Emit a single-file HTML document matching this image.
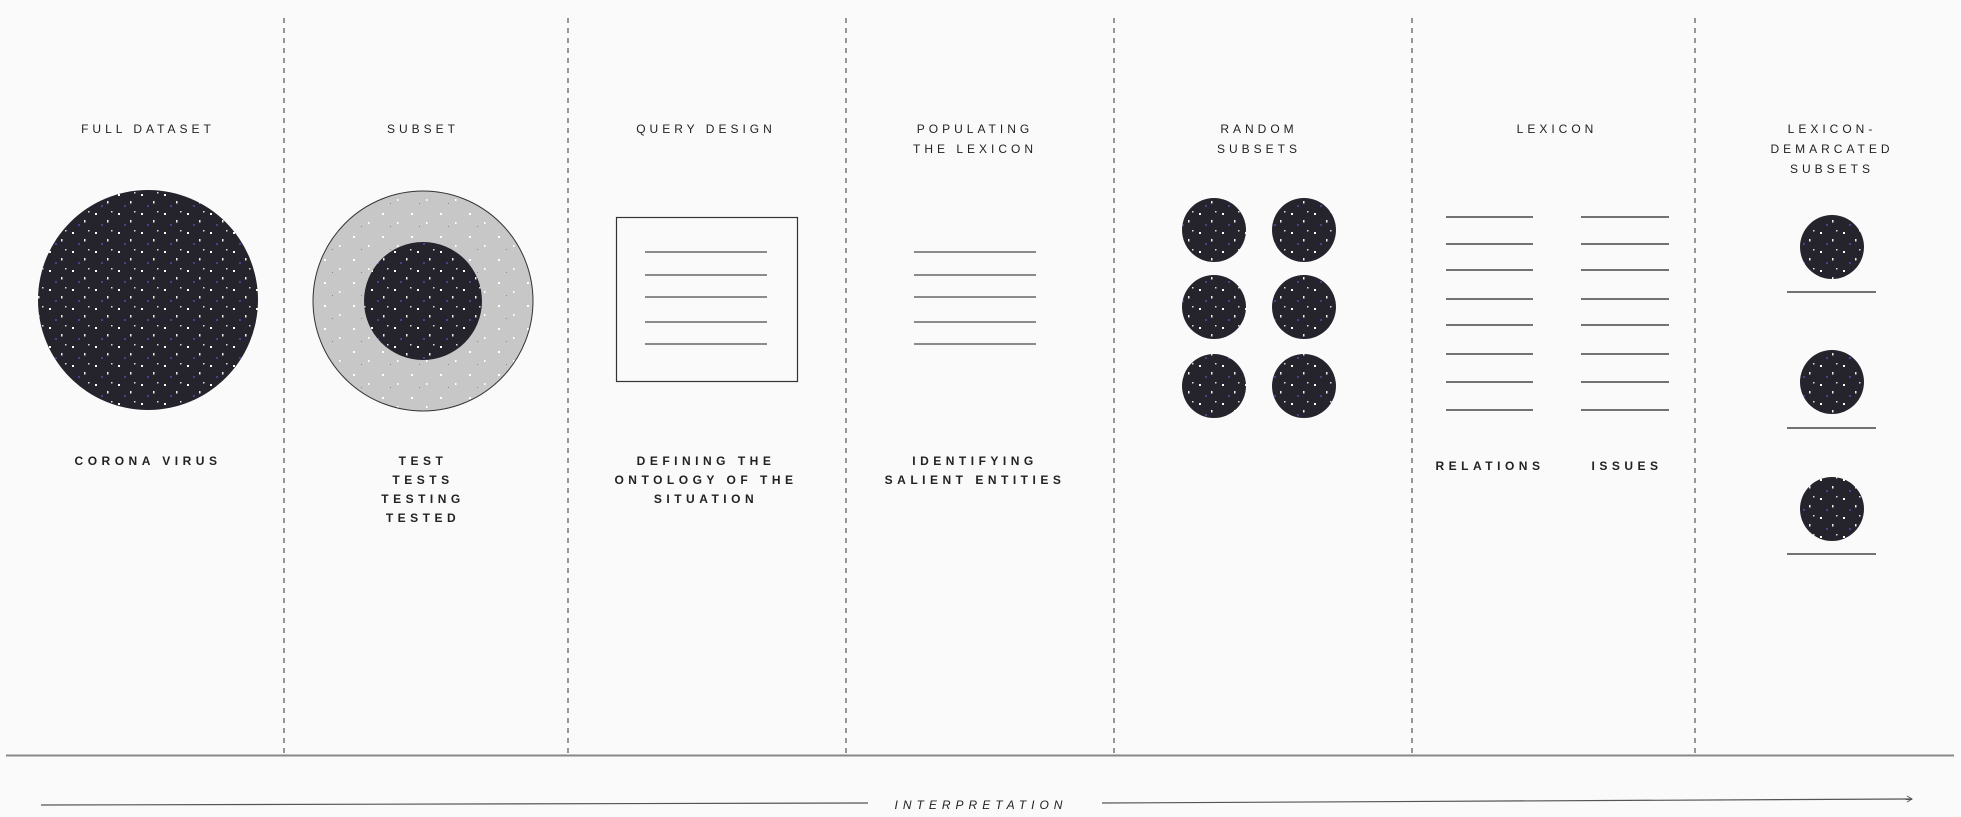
<!DOCTYPE html>
<html><head><meta charset="utf-8"><style>
html,body{margin:0;padding:0;background:#fbfafa;}
svg{display:block}
text{font-family:"Liberation Sans",sans-serif;font-size:12px;letter-spacing:4px;fill:#222;text-anchor:middle;}
.b{font-weight:bold;letter-spacing:4.5px}
</style></head><body>
<svg width="1961" height="817" viewBox="0 0 1961 817" xmlns="http://www.w3.org/2000/svg">
<defs>
<pattern id="sp" width="23" height="19" patternUnits="userSpaceOnUse">
<rect width="23" height="19" fill="#25242c"/>
<rect x="3" y="4" width="2" height="2" fill="#fff"/>
<rect x="15" y="11" width="1.5" height="2.5" fill="#eee"/>
<rect x="9" y="15" width="2" height="2" fill="#4a3f90"/>
<rect x="19" y="2" width="1.5" height="1.5" fill="#ddd"/>
</pattern>
<pattern id="sp2" width="29" height="23" patternUnits="userSpaceOnUse">
<rect width="29" height="23" fill="#c7c7c7"/>
<rect x="5" y="6" width="2" height="2" fill="#fff"/>
<rect x="20" y="15" width="1.5" height="2" fill="#fff"/>
<rect x="13" y="19" width="1" height="1" fill="#888"/>
</pattern>
</defs>
<g stroke="#555" stroke-width="1.2" stroke-dasharray="5,5">
<line x1="284" y1="18" x2="284" y2="755"/>
<line x1="568" y1="18" x2="568" y2="755"/>
<line x1="846" y1="18" x2="846" y2="755"/>
<line x1="1114" y1="18" x2="1114" y2="755"/>
<line x1="1412" y1="18" x2="1412" y2="755"/>
<line x1="1695" y1="18" x2="1695" y2="755"/>
</g>
<line x1="6" y1="755.5" x2="1954" y2="755.5" stroke="#888" stroke-width="2"/>
<line x1="41" y1="805" x2="868" y2="803" stroke="#555" stroke-width="1.2"/>
<line x1="1102" y1="803" x2="1912" y2="799" stroke="#555" stroke-width="1.2"/>
<polyline points="1907,796 1912,799 1907,802" fill="none" stroke="#555" stroke-width="1"/>
<text x="981" y="809" style="font-style:italic;letter-spacing:5px;font-size:12px">INTERPRETATION</text>

<text x="148" y="133">FULL DATASET</text>
<circle cx="148" cy="300" r="110" fill="url(#sp)"/>
<text class="b" x="148" y="465">CORONA VIRUS</text>

<text x="423" y="133">SUBSET</text>
<circle cx="423" cy="301" r="110" fill="url(#sp2)" stroke="#333" stroke-width="1"/>
<circle cx="423" cy="301" r="59" fill="url(#sp)"/>
<text class="b" x="423" y="465">TEST</text>
<text class="b" x="423" y="484">TESTS</text>
<text class="b" x="423" y="503">TESTING</text>
<text class="b" x="423" y="522">TESTED</text>

<text x="706" y="133">QUERY DESIGN</text>
<rect x="616.5" y="217.5" width="181" height="164" fill="none" stroke="#333" stroke-width="1.2"/>
<g stroke="#666" stroke-width="1.5">
<line x1="645" y1="252" x2="767" y2="252"/><line x1="645" y1="275" x2="767" y2="275"/><line x1="645" y1="297" x2="767" y2="297"/><line x1="645" y1="322" x2="767" y2="322"/><line x1="645" y1="344" x2="767" y2="344"/>
<line x1="914" y1="252" x2="1036" y2="252"/><line x1="914" y1="275" x2="1036" y2="275"/><line x1="914" y1="297" x2="1036" y2="297"/><line x1="914" y1="322" x2="1036" y2="322"/><line x1="914" y1="344" x2="1036" y2="344"/>
</g>
<text class="b" x="706" y="465">DEFINING THE</text>
<text class="b" x="706" y="484">ONTOLOGY OF THE</text>
<text class="b" x="706" y="503">SITUATION</text>

<text x="975" y="133">POPULATING</text>
<text x="975" y="153">THE LEXICON</text>
<text class="b" x="975" y="465">IDENTIFYING</text>
<text class="b" x="975" y="484">SALIENT ENTITIES</text>

<text x="1259" y="133">RANDOM</text>
<text x="1259" y="153">SUBSETS</text>
<g fill="url(#sp)">
<circle cx="1214" cy="230" r="32"/><circle cx="1304" cy="230" r="32"/>
<circle cx="1214" cy="307" r="32"/><circle cx="1304" cy="307" r="32"/>
<circle cx="1214" cy="386" r="32"/><circle cx="1304" cy="386" r="32"/>
</g>

<text x="1557" y="133">LEXICON</text>
<g stroke="#444" stroke-width="1.5">
<line x1="1446" y1="217" x2="1533" y2="217"/><line x1="1581" y1="217" x2="1669" y2="217"/>
<line x1="1446" y1="244" x2="1533" y2="244"/><line x1="1581" y1="244" x2="1669" y2="244"/>
<line x1="1446" y1="270" x2="1533" y2="270"/><line x1="1581" y1="270" x2="1669" y2="270"/>
<line x1="1446" y1="299" x2="1533" y2="299"/><line x1="1581" y1="299" x2="1669" y2="299"/>
<line x1="1446" y1="325" x2="1533" y2="325"/><line x1="1581" y1="325" x2="1669" y2="325"/>
<line x1="1446" y1="354" x2="1533" y2="354"/><line x1="1581" y1="354" x2="1669" y2="354"/>
<line x1="1446" y1="382" x2="1533" y2="382"/><line x1="1581" y1="382" x2="1669" y2="382"/>
<line x1="1446" y1="410" x2="1533" y2="410"/><line x1="1581" y1="410" x2="1669" y2="410"/>
</g>
<text class="b" x="1490" y="470">RELATIONS</text>
<text class="b" x="1627" y="470">ISSUES</text>

<text x="1832" y="133">LEXICON-</text>
<text x="1832" y="153">DEMARCATED</text>
<text x="1832" y="173">SUBSETS</text>
<g fill="url(#sp)">
<circle cx="1832" cy="247" r="32"/><circle cx="1832" cy="382" r="32"/><circle cx="1832" cy="509" r="32"/>
</g>
<g stroke="#444" stroke-width="1.5">
<line x1="1787" y1="292" x2="1876" y2="292"/><line x1="1787" y1="428" x2="1876" y2="428"/><line x1="1787" y1="554" x2="1876" y2="554"/>
</g>
</svg>
</body></html>
